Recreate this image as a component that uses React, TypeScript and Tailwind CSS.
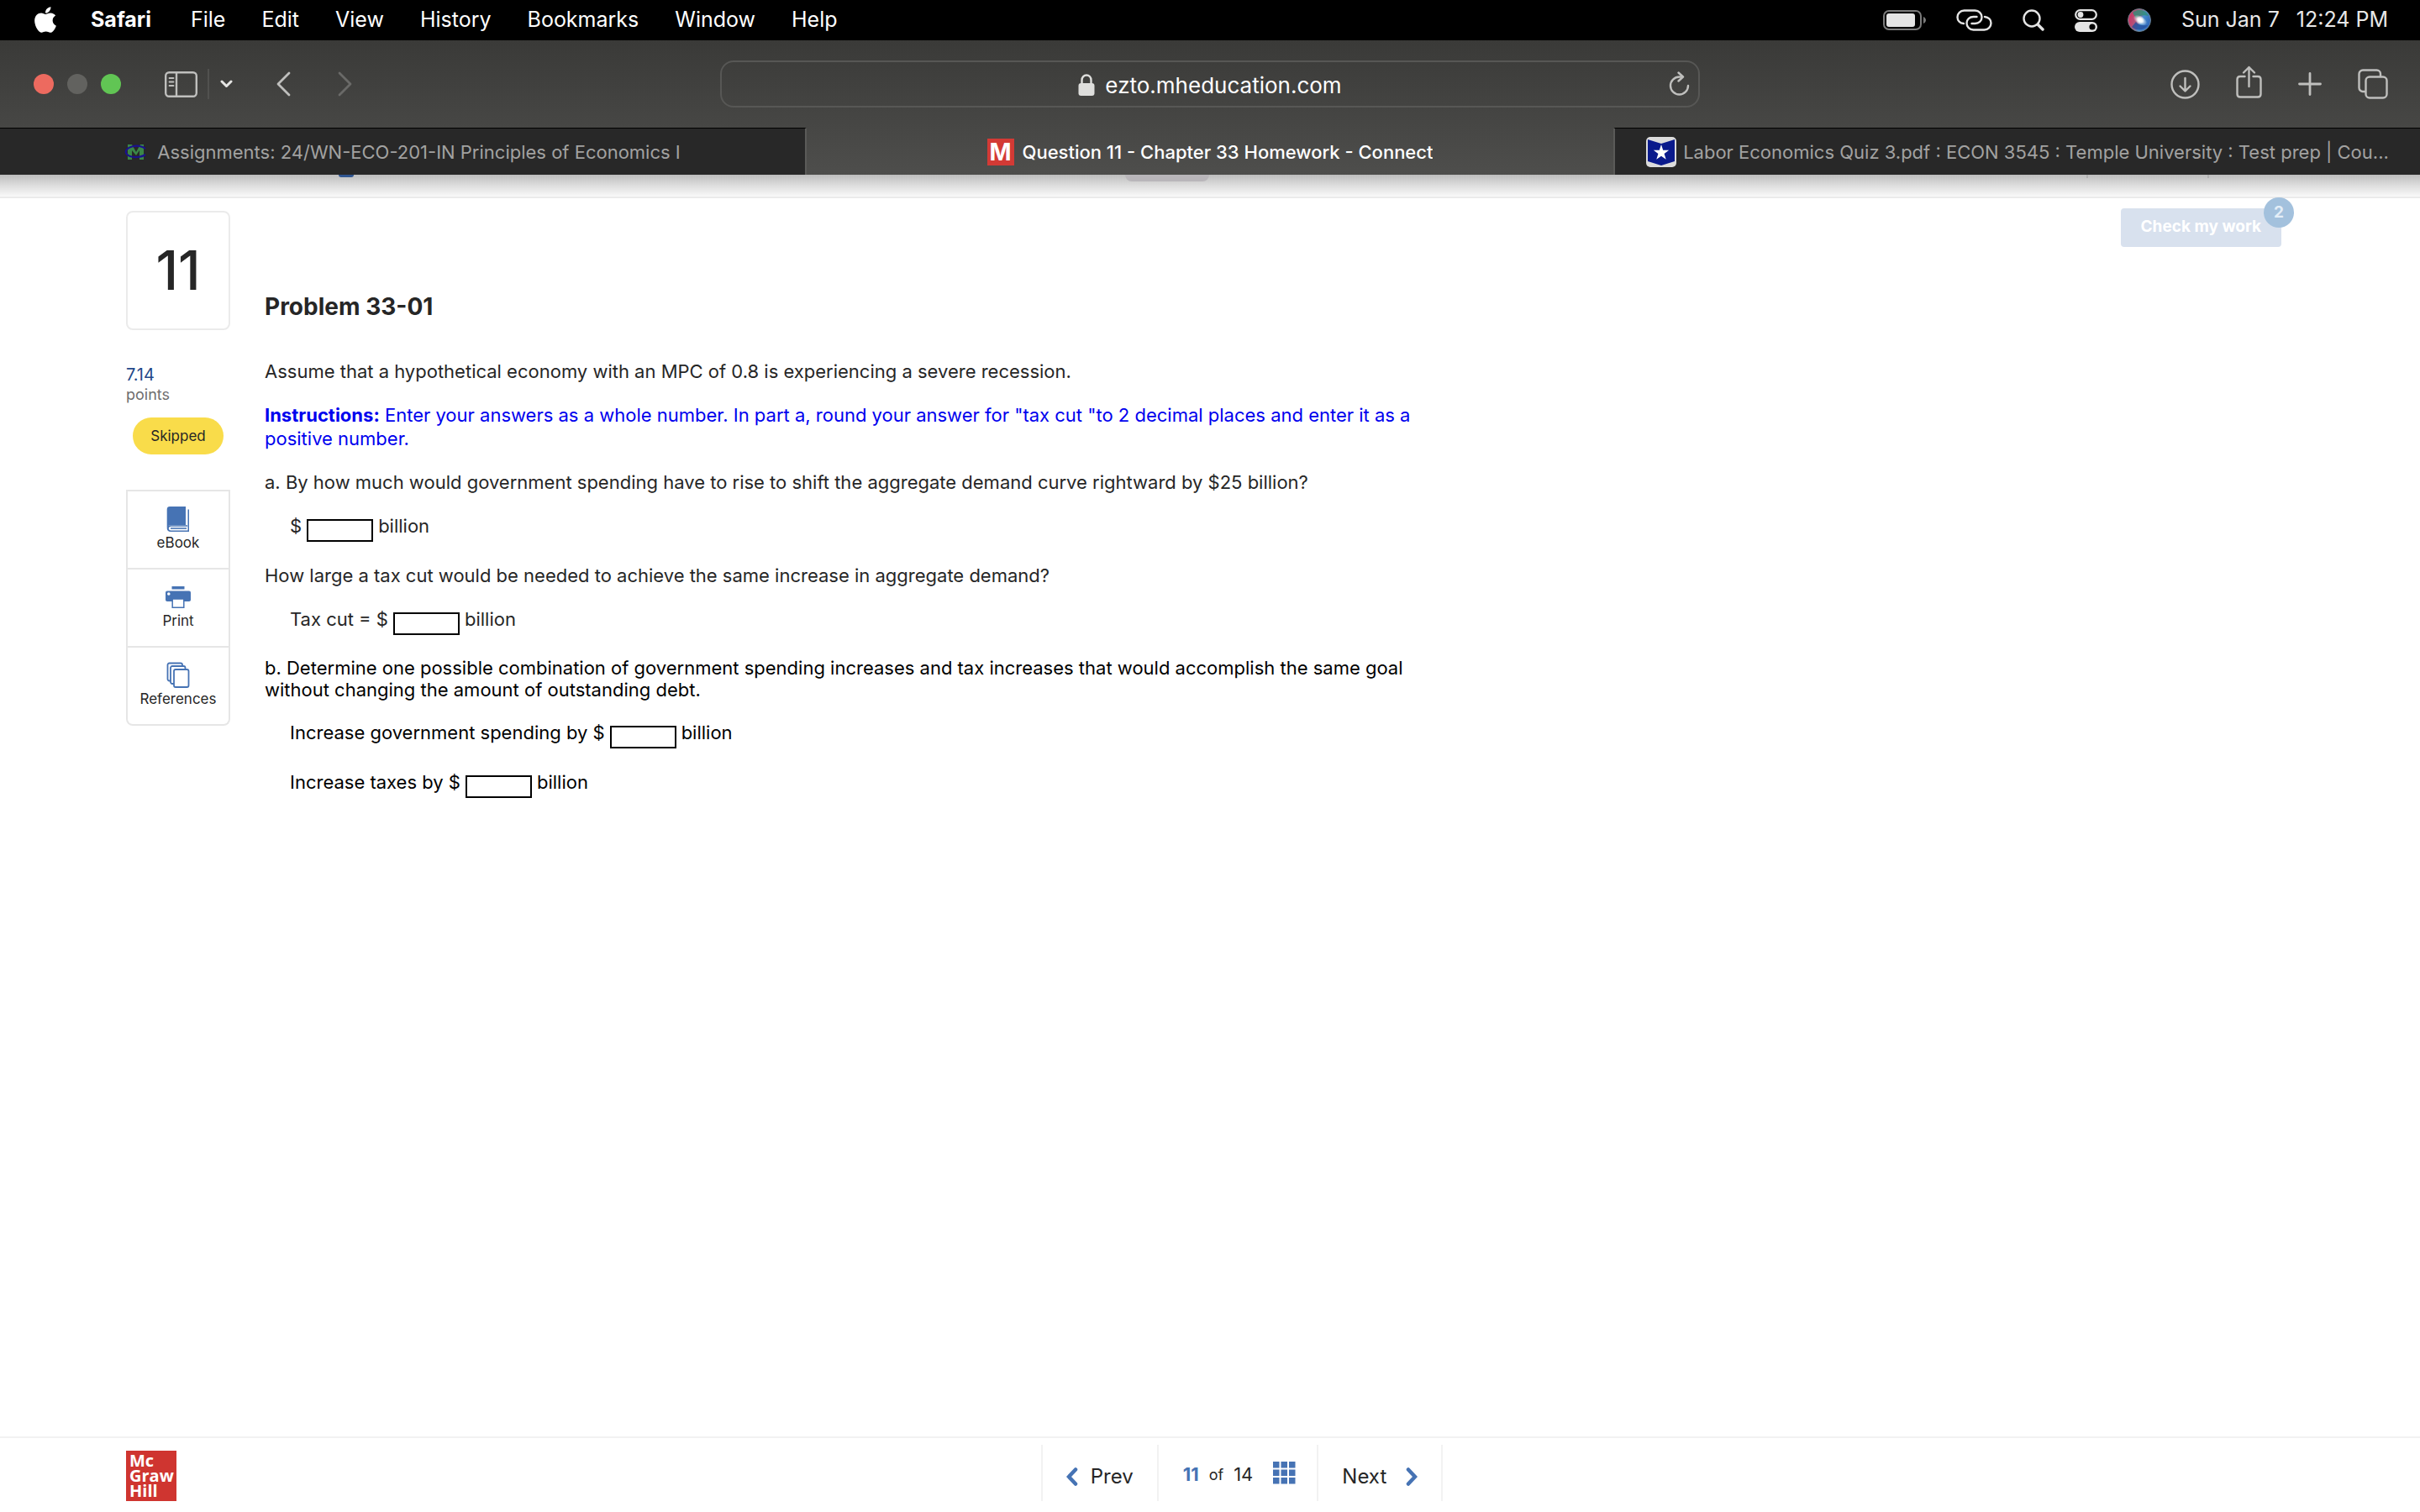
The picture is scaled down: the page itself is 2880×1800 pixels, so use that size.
import { FaApple } from "react-icons/fa";

const menus = ["File", "Edit", "View", "History", "Bookmarks", "Window", "Help"];

function MenuBar() {
  return (
    <header className="flex h-12 items-center justify-between bg-black pl-10 pr-[38px] text-[25px] text-white">
      <nav className="flex items-center gap-[43px]">
        <button aria-label="Apple menu" className="-mr-[3px] pb-[2px]">
          <FaApple size={35} className="w-7" />
        </button>
        <button className="mr-1 font-bold">Safari</button>
        {menus.map((m) => (
          <button key={m}>{m}</button>
        ))}
      </nav>
      <div className="flex items-center gap-9 text-[#e8e8e8]">
        <svg width="51" height="24" viewBox="0 0 51 24" fill="none">
          <rect x="1" y="1" width="44" height="22" rx="6" stroke="#7a7a7a" strokeWidth="2" />
          <rect x="4" y="4" width="34" height="16" rx="3" fill="#e4e4e4" />
          <path d="M48 8c2 1 3 2.500 3 4s-1 3-3 4z" fill="#7a7a7a" />
        </svg>
        <svg width="43" height="26" viewBox="0 0 43 26" fill="none" stroke="#e4e4e4" strokeWidth="2.4" strokeLinecap="round">
          <path d="M9 17C4.500 16.500 1.500 13.500 1.500 9.500 1.500 5 5 1.500 9.500 1.500h13c4.500 0 8 3.500 8 8s-3.500 7.500-8 7.500h-4" />
          <path d="M34 9c4.500.5 7.500 3.500 7.500 7.500 0 4.500-3.500 8-8 8h-13c-4.500 0-8-3.500-8-8S16 9 20.500 9h4" />
        </svg>
        <svg width="26" height="26" viewBox="0 0 26 26" fill="none" stroke="#e4e4e4" strokeLinecap="round">
          <circle cx="11" cy="11" r="9.500" strokeWidth="2.400" />
          <path d="M18.500 18.500 24 24" strokeWidth="3.400" />
        </svg>
        <svg width="27" height="27" viewBox="0 0 27 27" fill="none">
          <rect x="1.200" y="1.200" width="24.600" height="10.600" rx="5.300" stroke="#e4e4e4" strokeWidth="2.200" />
          <circle cx="7" cy="6.500" r="3.400" fill="#e4e4e4" />
          <rect x="0" y="15" width="27" height="12" rx="6" fill="#e4e4e4" />
          <circle cx="21" cy="21" r="3.600" fill="#000" />
        </svg>
        <svg width="28" height="28" viewBox="0 0 28 28">
          <defs>
            <linearGradient id="siri" x1="0" y1="0.300" x2="1" y2="0.700">
              <stop offset="0" stopColor="#d0305e" />
              <stop offset="0.400" stopColor="#b0587e" />
              <stop offset="0.600" stopColor="#4a8fce" />
              <stop offset="1" stopColor="#2b62b8" />
            </linearGradient>
            <radialGradient id="siriGlow">
              <stop offset="0" stopColor="#fff" />
              <stop offset="0.300" stopColor="#fff" stopOpacity="0.900" />
              <stop offset="1" stopColor="#fff" stopOpacity="0" />
            </radialGradient>
          </defs>
          <circle cx="14" cy="14" r="13.500" fill="url(#siri)" stroke="#6b7f8c" />
          <path d="M6 5c5-5 15-5 19 4-6-2-12 0-15 3z" fill="#2f8f78" opacity="0.800" />
          <path d="M5 22c5 5 14 5 19-2-7 1-12 0-14-4z" fill="#244f9e" opacity="0.800" />
          <ellipse cx="15" cy="14" rx="9" ry="5" fill="url(#siriGlow)" transform="rotate(30 15 14)" />
          <circle cx="15" cy="14" r="5" fill="url(#siriGlow)" />
        </svg>
        <div className="flex gap-5">
          <span>Sun Jan 7</span>
          <span>12:24 PM</span>
        </div>
      </div>
    </header>
  );
}

function Toolbar() {
  return (
    <div className="grid h-[104px] grid-cols-[1fr_40.5%_1fr] items-center text-[#bfbfbd]">
      <div className="flex items-center pl-10">
        <div className="flex gap-4">
          <button aria-label="Close" className="size-6 rounded-full bg-[#ed6a5f]" />
          <button aria-label="Minimize" className="size-6 rounded-full bg-[#62625f]" />
          <button aria-label="Zoom" className="size-6 rounded-full bg-[#61c554]" />
        </div>
        <button aria-label="Sidebar" className="ml-13">
          <svg width="39" height="31" viewBox="0 0 39 31" fill="none" stroke="currentColor" strokeWidth="2.400">
            <rect x="1.200" y="1.200" width="36.600" height="28.600" rx="4" />
            <path d="M14 1v29" />
            <path d="M5.500 8h5M5.500 12.500h5M5.500 17h5" strokeWidth="1.800" strokeLinecap="round" />
          </svg>
        </button>
        <div className="ml-3 h-9 w-[2px] bg-[#51514f]" />
        <button aria-label="Tab groups" className="ml-[13px]">
          <svg width="15" height="10" viewBox="0 0 15 10" fill="none" stroke="#e6e6e4" strokeWidth="3" strokeLinecap="round" strokeLinejoin="round">
            <path d="M2 2l5.500 5.500L13 2" />
          </svg>
        </button>
        <button aria-label="Back" className="ml-13">
          <svg width="17" height="30" viewBox="0 0 17 30" fill="none" stroke="currentColor" strokeWidth="2.800" strokeLinecap="round" strokeLinejoin="round">
            <path d="M15 2 2 15l13 13" />
          </svg>
        </button>
        <button aria-label="Forward" className="ml-14 text-[#6a6a68]">
          <svg width="17" height="30" viewBox="0 0 17 30" fill="none" stroke="currentColor" strokeWidth="2.800" strokeLinecap="round" strokeLinejoin="round">
            <path d="m2 2 13 13L2 28" />
          </svg>
        </button>
      </div>
      <div className="grid h-14 grid-cols-[1fr_auto_1fr] items-center rounded-2xl border-2 border-[#575755]">
        <div />
        <div className="flex items-center gap-3 pt-[2px]">
          <svg width="20" height="26" viewBox="0 0 20 26" fill="none">
            <rect x="0.500" y="11" width="19" height="15" rx="3" fill="#dededc" />
            <path d="M4.500 12V7.500C4.500 4 7 1.500 10 1.500s5.500 2.500 5.500 6V12" stroke="#dededc" strokeWidth="2.400" />
          </svg>
          <input
            aria-label="Address"
            defaultValue="ezto.mheducation.com"
            className="field-sizing-content bg-transparent text-[26px] text-white outline-none"
          />
        </div>
        <button aria-label="Reload" className="mr-2 justify-self-end">
          <svg width="28" height="30" viewBox="0 0 28 30" fill="none" stroke="currentColor" strokeWidth="2.400" strokeLinecap="round" strokeLinejoin="round">
            <path d="M24 17a10.500 10.500 0 1 1-10.500-10.500h3" />
            <path d="m12.500 1.500 5.500 5-5.500 5" />
          </svg>
        </button>
      </div>
      <div className="flex items-center justify-end gap-[43px] pr-[38px]">
        <button aria-label="Downloads">
          <svg width="35" height="35" viewBox="0 0 35 35" fill="none" stroke="currentColor" strokeWidth="2.400" strokeLinecap="round" strokeLinejoin="round">
            <circle cx="17.500" cy="17.500" r="16" />
            <path d="M17.500 10v15M11.500 19.500l6 6 6-6" />
          </svg>
        </button>
        <button aria-label="Share" className="pb-1">
          <svg width="31" height="40" viewBox="0 0 31 40" fill="none" stroke="currentColor" strokeWidth="2.400" strokeLinecap="round" strokeLinejoin="round">
            <path d="M10.500 13H5c-2 0-3.500 1.500-3.500 3.500V34c0 2 1.500 3.500 3.500 3.500h21c2 0 3.500-1.500 3.500-3.500V16.500c0-2-1.500-3.500-3.500-3.500h-5.500" />
            <path d="M15.500 25V2M9 8.500 15.500 2 22 8.500" />
          </svg>
        </button>
        <button aria-label="New tab">
          <svg width="28" height="28" viewBox="0 0 28 28" stroke="currentColor" strokeWidth="2.800" strokeLinecap="round">
            <path d="M14 1.500v25M1.500 14h25" />
          </svg>
        </button>
        <button aria-label="Tab overview">
          <svg width="36" height="36" viewBox="0 0 36 36" fill="none" stroke="currentColor" strokeWidth="2.400">
            <rect x="9.500" y="9.500" width="25" height="25" rx="4.500" />
            <path d="M9.500 27H6c-2.500 0-4.500-2-4.500-4.500V6c0-2.500 2-4.500 4.500-4.500h16.500c2.500 0 4.500 2 4.500 4.500v3.500" />
          </svg>
        </button>
      </div>
    </div>
  );
}

function Tabs() {
  return (
    <div className="grid h-14 grid-cols-3 text-[22px] text-[#a2a2a1]">
      <button className="flex min-w-0 items-center justify-center gap-3 border-t border-r-2 border-t-black border-r-[#5a5a58] bg-[#282828] pt-px">
        <svg width="27" height="20" viewBox="0 0 27 20" fill="none">
          <path d="M4 19V1h5l5 9 5-9h4v18h-5V8l-4 6-5-6v11z" fill="#3b8748" />
          <path d="M25 6C21 2.500 14 2 9 3.500 3.500 5 1 8 2 11c1 3.500 7 5.500 13 5 4-.3 8-1.500 10-3" stroke="#1b128c" strokeWidth="2.200" />
        </svg>
        <span className="truncate">Assignments: 24/WN-ECO-201-IN Principles of Economics I</span>
      </button>
      <button className="flex min-w-0 items-center justify-center gap-[10px] pt-[2px] font-medium text-white">
        <span className="flex size-8 items-center justify-center bg-[#d33a35] text-[28px] font-bold">M</span>
        <span className="truncate">Question 11 - Chapter 33 Homework - Connect</span>
      </button>
      <button className="flex min-w-0 items-center justify-center gap-2 border-t border-l-2 border-t-black border-l-[#5a5a58] bg-[#282828] pt-px">
        <svg width="36" height="36" viewBox="0 0 36 36">
          <rect width="36" height="36" rx="5" fill="#dcdcdc" />
          <path d="M2 3l16 5 16-5v26l-16 5-16-5z" fill="#0a1a8c" />
          <path d="M18 9l2.200 6.700h7L21.600 20l2.100 6.800L18 22.700l-5.700 4.100 2.100-6.800-5.600-4.300h7z" fill="#fff" />
        </svg>
        <span className="truncate">Labor Economics Quiz 3.pdf : ECON 3545 : Temple University : Test prep | Cou...</span>
      </button>
    </div>
  );
}

function BookIcon() {
  return (
    <svg width="28" height="32" viewBox="0 0 28 32" fill="#4673b4">
      <path d="M4 1h19v22H6c-3 0-4 1-4.500 2.500L.7 26V4.500C.7 2 2 1 4 1z" />
      <path d="M25.500 4.500H27V31H5c-2.800 0-4.300-1.800-4.300-4s1.500-3.700 4.300-3.700h20v1.400H5.500c-1.800 0-2.700 1-2.700 2.300s.9 2.400 2.700 2.400h20z" />
      <path d="M5 26.200h19v1.600H5z" />
    </svg>
  );
}

function PrintIcon() {
  return (
    <svg width="30" height="32" viewBox="0 0 30 32" fill="#4673b4">
      <path d="M7.500 3h15v3.500h-15z" />
      <path d="M2 8.500h26c1.200 0 2 .8 2 2V19c0 1.200-.8 2-2 2H2c-1.200 0-2-.8-2-2v-8.500c0-1.200.8-2 2-2z" />
      <circle cx="3.800" cy="12" r="1.800" fill="#fff" />
      <path d="M8.200 18h13.600v10.300H8.200z" fill="#fff" stroke="#4673b4" strokeWidth="1.500" />
    </svg>
  );
}

function ReferencesIcon() {
  return (
    <svg width="28" height="32" viewBox="0 0 28 32" fill="#fff" stroke="#4673b4" strokeWidth="1.800">
      <rect x="1.500" y="1.500" width="17.500" height="21" rx="2" />
      <rect x="5" y="5" width="17.500" height="21" rx="2" />
      <rect x="9" y="9" width="17.500" height="21" rx="2" />
    </svg>
  );
}

const tools = [
  { label: "eBook", icon: <BookIcon /> },
  { label: "Print", icon: <PrintIcon /> },
  { label: "References", icon: <ReferencesIcon /> },
];

function Sidebar() {
  return (
    <aside className="w-31 shrink-0 pt-[15px]">
      <div className="flex h-[142px] items-center justify-center rounded-lg border-2 border-[#ebebeb] text-[64px] font-medium">
        11
      </div>
      <p className="mt-[41px] text-xl leading-6 text-[#23488a]">7.14</p>
      <p className="text-lg leading-6 text-[#6e6e6e]">points</p>
      <div className="mx-auto mt-[15px] flex h-11 w-27 items-center justify-center rounded-full bg-[#f9dc4a] pt-px text-[17px]">
        Skipped
      </div>
      <div className="mt-[42px] rounded-b-lg border-x-2 border-b-2 border-[#e6e6e6]">
        {tools.map((t) => (
          <button
            key={t.label}
            className="flex w-full flex-col items-center border-t-2 border-[#e6e6e6] pt-[17px] pb-[18px] text-[17px] leading-6"
          >
            {t.icon}
            {t.label}
          </button>
        ))}
      </div>
    </aside>
  );
}

function Answer({ label }: { label: string }) {
  return (
    <div className="flex h-[35px] items-start gap-[6px] pl-[30px]">
      <label className="flex gap-[6px]">
        {label}
        <input className="mt-[6px] h-[27px] w-[79px] border-2 border-black px-1 text-lg outline-none" />
      </label>
      <span>billion</span>
    </div>
  );
}

function Problem() {
  return (
    <section className="ml-[41px] max-w-[1400px] pt-[111px]">
      <h1 className="text-[28px] leading-9 font-bold">Problem 33-01</h1>
      <div className="mt-[45px] flex flex-col gap-6 text-[22px] leading-7">
        <p>Assume that a hypothetical economy with an MPC of 0.8 is experiencing a severe recession.</p>
        <p className="text-[#0000ee]">
          <b>Instructions:</b> Enter your answers as a whole number. In part a, round your answer for "tax cut "to 2
          decimal places and enter it as a positive number.
        </p>
        <p>
          a. By how much would government spending have to rise to shift the aggregate demand curve rightward by $25
          billion?
        </p>
        <Answer label="$" />
        <p>How large a tax cut would be needed to achieve the same increase in aggregate demand?</p>
        <Answer label="Tax cut = $" />
        <p className="leading-[26px] text-black">
          b. Determine one possible combination of government spending increases and tax increases that would accomplish
          the same goal without changing the amount of outstanding debt.
        </p>
        <div className="flex flex-col gap-6 text-black">
          <Answer label="Increase government spending by $" />
          <Answer label="Increase taxes by $" />
        </div>
      </div>
    </section>
  );
}

function Footer() {
  return (
    <footer className="flex items-end gap-4 border-t-2 border-[#f2f2f2] px-[150px] pt-2 pb-[13px]">
      <a href="#" className="flex size-15 flex-col bg-[#cf3530] pt-[3px] pl-1 text-xl leading-[18px] font-bold text-white font-['Open_Sans',sans-serif]">
        <span>Mc</span>
        <span>Graw</span>
        <span>Hill</span>
      </a>
      <nav className="mx-auto flex h-[67px] divide-x-2 divide-[#f2f2f2] border-x-2 border-[#f2f2f2] text-[24px]">
        <button className="flex items-center gap-[14px] px-7 pt-[9px]">
          <svg width="15" height="24" viewBox="0 0 15 24" fill="none" stroke="#4673b4" strokeWidth="4.500" strokeLinecap="round">
            <path d="M11 3.500 3 12l8 8.500" />
          </svg>
          Prev
        </button>
        <div className="flex items-center gap-3 pt-1 pr-[25px] pl-[29px] text-[22px]">
          <b className="text-[#4673b4]">11</b>
          <span className="text-lg">of</span>
          <span>14</span>
          <button aria-label="Question list" className="ml-3 pb-1">
            <svg width="27" height="27" viewBox="0 0 27 27" fill="#4673b4">
              <path d="M0 0h7.500v7.500H0zM9.500 0H17v7.500H9.500zM19 0h7.500v7.500H19zM0 9.500h7.500V17H0zM9.500 9.500H17V17H9.500zM19 9.500h7.500V17H19zM0 19h7.500v7.500H0zM9.500 19H17v7.500H9.500zM19 19h7.500v7.500H19z" />
            </svg>
          </button>
        </div>
        <button className="flex items-center gap-[22px] px-7 pt-[9px]">
          Next
          <svg width="15" height="24" viewBox="0 0 15 24" fill="none" stroke="#4673b4" strokeWidth="4.500" strokeLinecap="round">
            <path d="m4 3.500 8 8.500-8 8.500" />
          </svg>
        </button>
      </nav>
    </footer>
  );
}

export default function App() {
  return (
    <div className="flex min-h-screen flex-col bg-white text-[#262626] font-['Inter',sans-serif]">
      <MenuBar />
      <div className="bg-linear-to-b from-[#3a3a38] to-[#4e4e4c]">
        <Toolbar />
        <Tabs />
      </div>
      {/* page header, scrolled up under the tab bar */}
      <div className="relative h-7 border-b-2 border-[#ebebeb] bg-linear-to-b from-[#bdbdbd] via-[#dedede] to-[#f9f9f9]">
        <div className="absolute top-0 left-[14%] h-[3px] w-[18px] rounded-b-full bg-[#2f5590]" />
        <div className="absolute top-0 left-[46.500%] h-2 w-[100px] rounded-b-lg bg-[#b9b6ba]" />
        <div className="absolute top-0 left-[86.200%] h-1 w-[2px] bg-[#b0b0b0]" />
        <div className="absolute top-0 left-[91.200%] h-1 w-[2px] bg-[#b0b0b0]" />
      </div>
      <main className="flex grow items-start pr-[165px] pl-[150px]">
        <Sidebar />
        <Problem />
        <button className="relative mt-3 ml-auto h-[46px] rounded bg-[#d8e1ee] px-6 pb-[2px] text-[19px] font-bold whitespace-nowrap text-white">
          Check my work
          <span className="absolute -top-[13px] -right-[15px] flex size-9 items-center justify-center rounded-full bg-[#a3c1dd] text-[#e4eef7]">
            2
          </span>
        </button>
      </main>
      <Footer />
    </div>
  );
}
